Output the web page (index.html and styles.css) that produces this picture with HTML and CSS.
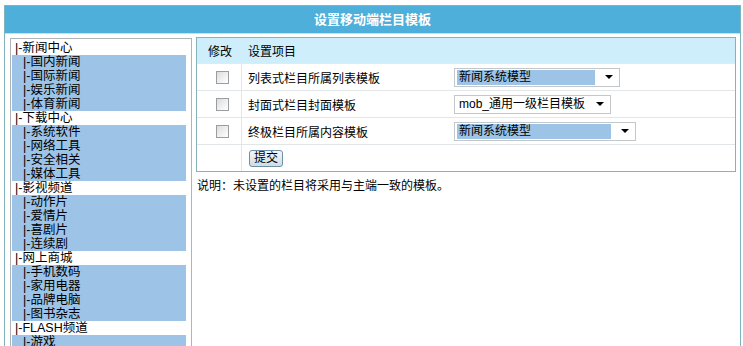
FILE: index.html
```html
<!DOCTYPE html>
<html lang="zh-CN">
<head>
<meta charset="utf-8">
<title>设置移动端栏目模板</title>
<link rel="stylesheet" href="styles.css">
</head>
<body>
<div class="panel">
  <div class="title">设置移动端栏目模板</div>
  <div class="content">
    <div class="tree">
      <div class="node top">|-新闻中心</div>
      <div class="node sub">|-国内新闻</div>
      <div class="node sub">|-国际新闻</div>
      <div class="node sub">|-娱乐新闻</div>
      <div class="node sub">|-体育新闻</div>
      <div class="node top">|-下载中心</div>
      <div class="node sub">|-系统软件</div>
      <div class="node sub">|-网络工具</div>
      <div class="node sub">|-安全相关</div>
      <div class="node sub">|-媒体工具</div>
      <div class="node top">|-影视频道</div>
      <div class="node sub">|-动作片</div>
      <div class="node sub">|-爱情片</div>
      <div class="node sub">|-喜剧片</div>
      <div class="node sub">|-连续剧</div>
      <div class="node top">|-网上商城</div>
      <div class="node sub">|-手机数码</div>
      <div class="node sub">|-家用电器</div>
      <div class="node sub">|-品牌电脑</div>
      <div class="node sub">|-图书杂志</div>
      <div class="node top">|-FLASH频道</div>
      <div class="node sub">|-游戏</div>
    </div>
    <div class="main">
      <div class="box">
        <div class="row head">
          <div class="c1">修改</div>
          <div class="c23">设置项目</div>
        </div>
        <div class="row">
          <div class="c1"><span class="chk"></span></div>
          <div class="c2">列表式栏目所属列表模板</div>
          <div class="c3"><div class="sel w1"><span class="val hl">新闻系统模型</span><span class="arrow"></span></div></div>
        </div>
        <div class="row">
          <div class="c1"><span class="chk"></span></div>
          <div class="c2">封面式栏目封面模板</div>
          <div class="c3"><div class="sel w2"><span class="val">mob_通用一级栏目模板</span><span class="arrow"></span></div></div>
        </div>
        <div class="row">
          <div class="c1"><span class="chk"></span></div>
          <div class="c2">终极栏目所属内容模板</div>
          <div class="c3"><div class="sel w3"><span class="val hl">新闻系统模型</span><span class="arrow"></span></div></div>
        </div>
        <div class="row last">
          <div class="c1"></div>
          <div class="c2"><button class="btn" type="button">提交</button></div>
          <div class="c3"></div>
        </div>
      </div>
      <p class="note">说明：未设置的栏目将采用与主端一致的模板。</p>
    </div>
  </div>
</div>
</body>
</html>
```
FILE: styles.css
```css
html, body {
  margin: 0;
  padding: 0;
  background: #ffffff;
  overflow: hidden;
}
body {
  font-family: "Liberation Sans", "Noto Sans CJK SC", sans-serif;
  font-size: 12px;
  color: #000;
}
.panel {
  margin: 5px 2px 0 4px;
  border: 1px solid #80b4bd;
  border-bottom: none;
  height: 400px;
}
.title {
  height: 27px;
  line-height: 27px;
  background: #4eafda;
  color: #ffffff;
  font-weight: bold;
  font-size: 13px;
  text-align: center;
  border-bottom: 1px solid #bfe3f1;
}
.content {
  display: flex;
  align-items: flex-start;
  padding: 3px 4px 0 5px;
  gap: 4px;
}
.tree {
  width: 182px;
  height: 360px;
  margin-top: 1px;
  border: 1px solid #aeb4b8;
  padding: 2px 5px 0 1px;
  box-sizing: border-box;
  overflow: hidden;
}
.node {
  height: 14px;
  line-height: 14px;
  font-size: 12.5px;
  white-space: nowrap;
}
.node.top {
  background: #ffffff;
  padding-left: 3px;
}
.node.sub {
  background: #9dc3e6;
  padding-left: 11px;
}
.main {
  flex: 1;
}
.box {
  border: 1px solid #86b3bb;
  background: #ffffff;
}
.row {
  display: grid;
  grid-template-columns: 45px 210px 1fr;
  height: 26px;
  border-bottom: 1px solid #e3e6e8;
  align-items: stretch;
}
.row.last {
  border-bottom: none;
  height: 26px;
}
.row.head {
  background: #cdeefa;
  border-bottom: 1px solid #d8eef6;
  height: 25px;
  grid-template-columns: 45px 1fr;
}
.c1 {
  display: flex;
  align-items: center;
  justify-content: center;
  border-right: 1px solid #e3e6e8;
  padding-left: 6px;
}
.row.head .c1 {
  border-right: 1px solid transparent;
  justify-content: flex-start;
  padding-left: 11px;
}
.c2, .c23 {
  display: flex;
  align-items: center;
  padding-left: 6px;
  white-space: nowrap;
}
.c3 {
  display: flex;
  align-items: center;
  padding-left: 2px;
}
.chk {
  display: block;
  width: 11px;
  height: 11px;
  border: 1px solid #9a9ea2;
  background: linear-gradient(135deg, #dcdcdc 0%, #f2f2f2 60%, #ffffff 100%);
}
.sel {
  display: flex;
  align-items: center;
  height: 19px;
  border: 1px solid #c3c7ca;
  background: #ffffff;
  box-sizing: border-box;
  padding: 1px 0 1px 2px;
}
.sel.w1 { width: 166px; }
.sel.w2 { width: 157px; }
.sel.w3 { width: 182px; }
.val {
  flex: 1;
  height: 15px;
  line-height: 15px;
  padding-left: 2px;
  white-space: nowrap;
}
.val.hl {
  background: #9dc3e6;
  margin-right: 8px;
}
.arrow {
  width: 0;
  height: 0;
  border-left: 4px solid transparent;
  border-right: 4px solid transparent;
  border-top: 4px solid #000;
  margin: 0 6px 0 2px;
}
.btn {
  font-family: "Liberation Sans", "Noto Sans CJK SC", sans-serif;
  font-size: 12px;
  height: 17px;
  line-height: 13px;
  padding: 0 4px;
  border: 1px solid #6f8fa6;
  border-radius: 3px;
  background: linear-gradient(#f4f8fb, #ccdce7);
  color: #000;
  margin-left: 1px;
}
.note {
  margin: 6px 0 0 1px;
  line-height: 16px;
  white-space: nowrap;
}
```
